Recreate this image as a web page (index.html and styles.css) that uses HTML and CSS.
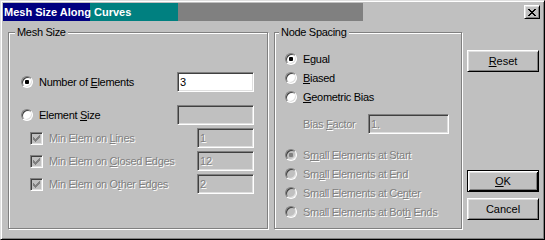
FILE: index.html
```html
<!DOCTYPE html>
<html lang="en">
<head>
  <meta charset="UTF-8">
  <title>Mesh Size Along Curves</title>
  <link rel="stylesheet" href="styles.css">
</head>
<body>
  <div class="window">
    <div class="titlebar">
      <span class="title">Mesh Size Along Curves</span>
      <button class="close raised" aria-label="Close">
        <svg width="8" height="7" viewBox="0 0 8 7"><path d="M0 0h2v1h-2z M6 0h2v1h-2z M1 1h2v1h-2z M5 1h2v1h-2z M2 2h4v1h-4z M3 3h2v1h-2z M2 4h4v1h-4z M1 5h2v1h-2z M5 5h2v1h-2z M0 6h2v1h-2z M6 6h2v1h-2z" fill="#000"/></svg>
      </button>
    </div>

    <div class="content">
      <!-- Mesh Size -->
      <fieldset class="group mesh">
        <legend>Mesh Size</legend>
        <div class="row">
          <label class="opt"><span class="radio on"></span><span>Number of <u>E</u>lements</span></label>
          <input class="field" type="text" value="3">
        </div>
        <div class="row second">
          <label class="opt"><span class="radio"></span><span>Element <u>S</u>ize</span></label>
          <input class="field" type="text" value="" disabled>
        </div>
        <div class="row check-row">
          <label class="opt off"><span class="check"><svg width="9" height="9" viewBox="0 0 9 9"><path d="M7 1h1v1h-1z M6 2h2v1h-2z M1 3h1v1h-1z M5 3h3v1h-3z M1 4h2v1h-2z M4 4h3v1h-3z M1 5h5v1h-5z M2 6h3v1h-3z M3 7h1v1h-1z"/></svg></span><span>Min Elem on <u>L</u>ines</span></label>
          <input class="field small" type="text" value="1" disabled>
        </div>
        <div class="row check-row">
          <label class="opt off"><span class="check"><svg width="9" height="9" viewBox="0 0 9 9"><path d="M7 1h1v1h-1z M6 2h2v1h-2z M1 3h1v1h-1z M5 3h3v1h-3z M1 4h2v1h-2z M4 4h3v1h-3z M1 5h5v1h-5z M2 6h3v1h-3z M3 7h1v1h-1z"/></svg></span><span>Min Elem on <u>C</u>losed Edges</span></label>
          <input class="field small" type="text" value="12" disabled>
        </div>
        <div class="row check-row">
          <label class="opt off"><span class="check"><svg width="9" height="9" viewBox="0 0 9 9"><path d="M7 1h1v1h-1z M6 2h2v1h-2z M1 3h1v1h-1z M5 3h3v1h-3z M1 4h2v1h-2z M4 4h3v1h-3z M1 5h5v1h-5z M2 6h3v1h-3z M3 7h1v1h-1z"/></svg></span><span>Min Elem on O<u>t</u>her Edges</span></label>
          <input class="field small" type="text" value="2" disabled>
        </div>
      </fieldset>

      <!-- Node Spacing -->
      <fieldset class="group spacing">
        <legend>Node Spacing</legend>
        <label class="opt line"><span class="radio on"></span><span>Egual</span></label>
        <label class="opt line"><span class="radio"></span><span><u>B</u>iased</span></label>
        <label class="opt line"><span class="radio"></span><span><u>G</u>eometric Bias</span></label>
        <div class="row bias">
          <span class="bias-label off">Bias <u>F</u>actor</span>
          <input class="field bias-field" type="text" value="1." disabled>
        </div>
        <div class="small-list">
          <label class="opt line off"><span class="radio on"></span><span>S<u>m</u>all Elements at Start</span></label>
          <label class="opt line off"><span class="radio"></span><span>Sm<u>a</u>ll Elements at End</span></label>
          <label class="opt line off"><span class="radio"></span><span>Small Elements at Ce<u>n</u>ter</span></label>
          <label class="opt line off"><span class="radio"></span><span>Small Elements at Bot<u>h</u> Ends</span></label>
        </div>
      </fieldset>

      <div class="buttons">
        <button class="btn raised"><u>R</u>eset</button>
        <button class="btn default ok"><u>O</u>K</button>
        <button class="btn raised cancel">Cancel</button>
      </div>
    </div>
  </div>
</body>
</html>
```

FILE: styles.css
```css
* {
  box-sizing: border-box;
}

body {
  margin: 0;
  background: #c0c0c0;
  font-family: "Liberation Sans", Arial, sans-serif;
  font-size: 11px;
  color: #000;
}

u {
  text-decoration: underline;
  text-underline-offset: 1px;
}

.window {
  width: 545px;
  height: 240px;
  padding: 2px;
  display: flex;
  flex-direction: column;
  background: #c0c0c0;
  border: 1px solid;
  border-color: #dfdfdf #000 #000 #dfdfdf;
  box-shadow: inset 1px 1px #fff, inset -1px -1px #808080;
}

.raised {
  background: #c0c0c0;
  border: 1px solid;
  border-color: #fff #000 #000 #fff;
  box-shadow: inset 1px 1px #dfdfdf, inset -1px -1px #808080;
}

/* Title bar */
.titlebar {
  height: 18px;
  display: flex;
  align-items: center;
  justify-content: space-between;
  padding: 0 2px 0 1px;
  background: linear-gradient(to right, #000080 0 87px, #008080 87px 175px, #808080 175px 360px, #c0c0c0 360px);
}
.title {
  color: #fff;
  font-weight: bold;
}
.close {
  width: 16px;
  height: 14px;
  padding: 0;
  display: flex;
  align-items: center;
  justify-content: center;
}

/* Main area */
.content {
  flex: 1;
  display: flex;
  align-items: flex-start;
  padding: 5px 3px 0 5px;
  letter-spacing: -0.3px;
}

.group {
  margin: 0;
  height: 203px;
  min-width: 0;
  border: 1px solid #808080;
  box-shadow: inset 1px 1px #fff, 1px 1px #fff;
}
.group legend {
  margin-left: -6px;
  padding: 0 2px;
  line-height: 13px;
  background: #c0c0c0;
}

.mesh {
  width: 260px;
  padding: 33px 13px 0 12px;
}
.spacing {
  width: 188px;
  margin-left: 6px;
  padding: 10px 0 0 10px;
}

.row {
  display: flex;
  align-items: center;
  justify-content: space-between;
  height: 20px;
}
.row.second {
  margin-top: 13px;
}
.check-row {
  margin-top: 3px;
  padding-left: 9px;
}

.opt {
  display: flex;
  align-items: center;
  gap: 6px;
  white-space: nowrap;
}
.opt.line {
  height: 19px;
}
.off {
  color: #808080;
  text-shadow: 1px 1px 0 #fff;
}

/* radio and check boxes */
.radio {
  width: 12px;
  height: 12px;
  flex: none;
  border-radius: 50%;
  background: #fff;
  border: 1px solid;
  border-color: #808080 #fff #fff #808080;
  box-shadow: inset 1px 1px #404040, inset -1px -1px #dfdfdf;
}
.radio.on {
  background: radial-gradient(circle, #000 0 2px, #fff 2.5px);
}
.off .radio {
  background: #c0c0c0;
}
.off .radio.on {
  background: radial-gradient(circle, #808080 0 2px, #c0c0c0 2.5px);
}

.check {
  width: 13px;
  height: 13px;
  flex: none;
  display: flex;
  align-items: center;
  justify-content: center;
  background: #c0c0c0;
  border: 1px solid;
  border-color: #808080 #fff #fff #808080;
  box-shadow: inset 1px 1px #404040, inset -1px -1px #dfdfdf;
  text-shadow: none;
}
.check svg {
  fill: #808080;
}

/* text fields */
.field {
  width: 77px;
  height: 20px;
  padding: 0 2px;
  font: inherit;
  letter-spacing: 0;
  color: #000;
  background: #fff;
  border: 1px solid;
  border-color: #808080 #fff #fff #808080;
  box-shadow: inset 1px 1px #404040, inset -1px -1px #dfdfdf;
  outline: none;
}
.field:disabled {
  color: #808080;
  background: #c0c0c0;
  text-shadow: 1px 1px 0 #fff;
}
.field.small {
  width: 57px;
}

.bias {
  margin-top: 8px;
  padding-left: 18px;
  justify-content: flex-start;
}
.bias-label {
  width: 65px;
}
.bias-field {
  width: 81px;
}
.small-list {
  margin-top: 11px;
}

/* buttons */
.buttons {
  width: 72px;
  margin-left: 5px;
  padding-top: 24px;
  display: flex;
  flex-direction: column;
}
.btn {
  height: 22px;
  padding: 0;
  font: inherit;
  color: #000;
}
.btn.default {
  background: #c0c0c0;
  border: 1px solid #000;
  box-shadow: inset 1px 1px #fff, inset -1px -1px #000, inset 2px 2px #dfdfdf, inset -2px -2px #808080;
}
.ok {
  margin-top: 98px;
}
.cancel {
  margin-top: 6px;
}
```
